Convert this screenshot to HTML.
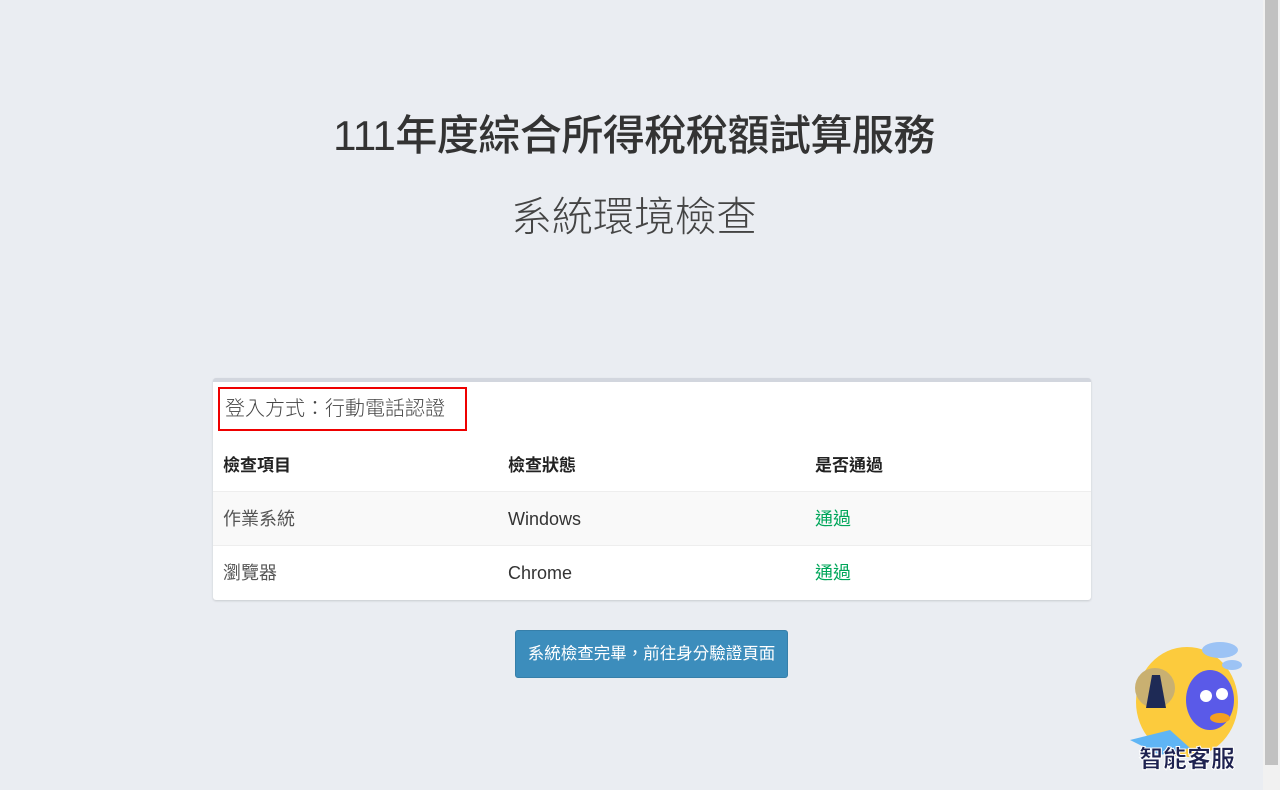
<!DOCTYPE html>
<html><head><meta charset="utf-8"><style>
body{margin:0;width:1280px;height:790px;background:#eaedf2;font-family:"Liberation Sans","Noto Sans CJK TC",sans-serif;position:relative;overflow:hidden;color:#333}
h1{position:absolute;top:104px;left:0;width:1268px;text-align:center;margin:0;font-size:42px;font-weight:500;color:#333;line-height:64px;letter-spacing:-0.5px}
h2{position:absolute;top:185px;left:0;width:1268px;text-align:center;margin:0;font-size:41px;font-weight:300;color:#444;line-height:64px}
.card{position:absolute;left:213px;top:378px;width:878px;height:218px;background:#fff;border-top:4px solid #d2d6de;border-radius:3px;box-shadow:0 1px 2px rgba(0,0,0,.15)}
.login{position:absolute;left:5px;top:5px;width:249px;height:44px;border:2px solid #e00;box-sizing:border-box;font-size:20px;font-weight:300;color:#444;line-height:40px;padding-left:5px;white-space:nowrap}
.row{position:absolute;left:0;width:878px;height:54px;font-size:18px;line-height:54px}
.row span{position:absolute}
.c1{left:10px}.c2{left:295px}.c3{left:602px}
.btn{position:absolute;left:515px;top:630px;width:273px;height:48px;background:#3c8dbc;border:1px solid #367fa9;box-sizing:border-box;border-radius:3px;color:#fff;font-size:16.5px;line-height:46px;text-align:center;white-space:nowrap}
.sb{position:absolute;right:0;top:0;width:17px;height:790px;background:#f1f1f1}
.sb div{position:absolute;left:2px;top:0;width:13px;height:765px;background:#c1c1c1}
</style></head><body>
<h1>111年度綜合所得稅稅額試算服務</h1>
<h2>系統環境檢查</h2>
<div class="card">
<div class="login">登入方式：行動電話認證</div>
<div class="row" style="top:57px;font-weight:bold;font-size:17px;color:#222"><span class="c1">檢查項目</span><span class="c2">檢查狀態</span><span class="c3">是否通過</span></div>
<div class="row" style="top:109px;background:#f9f9f9;border-top:1px solid #eee"><span class="c1" style="color:#555">作業系統</span><span class="c2">Windows</span><span class="c3" style="color:#00a65a">通過</span></div>
<div class="row" style="top:163px;border-top:1px solid #eee"><span class="c1" style="color:#555">瀏覽器</span><span class="c2">Chrome</span><span class="c3" style="color:#00a65a">通過</span></div>
</div>
<div class="btn">系統檢查完畢，前往身分驗證頁面</div>
<svg style="position:absolute;left:1130px;top:630px" width="115" height="145">
<ellipse cx="57" cy="72" rx="51" ry="55" fill="#fccb3d"/>
<ellipse cx="90" cy="20" rx="18" ry="8" fill="#9cc3f5"/><ellipse cx="102" cy="35" rx="10" ry="5" fill="#9cc3f5"/>
<circle cx="25" cy="58" r="20" fill="#c9b071"/>
<path d="M16 78 L22 45 H30 L36 78 Z" fill="#1e2a55"/>
<ellipse cx="80" cy="70" rx="24" ry="30" fill="#5a5ae8"/>
<path d="M0 110 L40 100 L60 118 L30 125 Z" fill="#5fb5f5"/>
<circle cx="76" cy="66" r="6" fill="#fff"/><circle cx="92" cy="64" r="6" fill="#fff"/>
<ellipse cx="90" cy="88" rx="10" ry="5" fill="#f5a020"/>
<text x="57" y="137" text-anchor="middle" font-family="Noto Sans CJK TC,sans-serif" font-weight="900" font-size="24" fill="#1e2250" stroke="#fff" stroke-width="1">智能客服</text>
</svg>
<div class="sb"><div></div></div>
</body></html>
